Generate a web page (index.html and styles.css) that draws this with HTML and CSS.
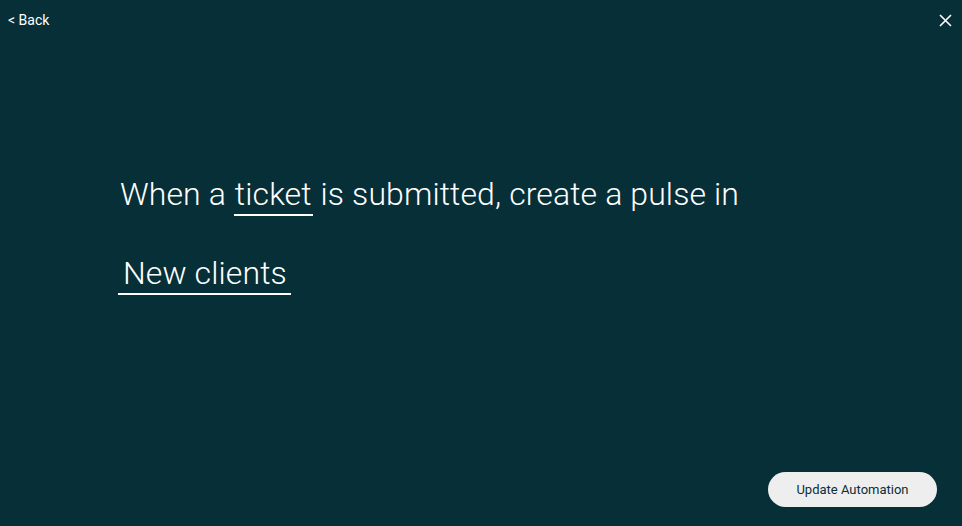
FILE: index.html
```html
<!DOCTYPE html>
<html lang="en">
<head>
    <meta charset="UTF-8">
    <meta name="viewport" content="width=device-width, initial-scale=1.0">
    <title>Edit Automation</title>
    <link rel="stylesheet" href="styles.css">
</head>
<body>
    <div class="page">
        <header class="topbar">
            <a class="back" href="#">&lt; Back</a>
            <button class="close" aria-label="Close">
                <svg width="13" height="13" viewBox="0 0 13 13">
                    <path d="M1 1 L12 12 M12 1 L1 12" stroke="#ffffff" stroke-width="1.6" fill="none"/>
                </svg>
            </button>
        </header>

        <main class="recipe">
            <p class="sentence">
                When a <span class="field">ticket</span> is submitted, create a pulse in
            </p>
            <p class="sentence">
                <span class="field wide">New clients</span>
            </p>
        </main>

        <footer class="actions">
            <button class="update">Update Automation</button>
        </footer>
    </div>
</body>
</html>
```

FILE: styles.css
```css
html, body {
    margin: 0;
    height: 100%;
}
body {
    background-color: #072f37;
    font-family: Roboto, "Noto Sans", sans-serif;
    color: #ffffff;
}
.page {
    height: 100%;
    display: flex;
    flex-direction: column;
}
.topbar {
    display: flex;
    justify-content: space-between;
    align-items: center;
    padding: 12px 10px 0 8px;
}
.back {
    color: #ffffff;
    text-decoration: none;
    font-size: 14px;
}
.close {
    background: none;
    border: none;
    padding: 0;
    cursor: pointer;
    display: flex;
}
.recipe {
    flex: 1;
    padding: 142px 0 0 120px;
}
.sentence {
    margin: 0 0 31px;
    font-size: 32px;
    font-weight: 300;
    line-height: 48px;
    letter-spacing: 0.1px;
}
.field {
    display: inline-block;
    border-bottom: 2px solid #ffffff;
    padding: 0 1px;
    line-height: 40px;
}
.field.wide {
    margin-left: -2px;
    padding: 0 4px 0 5px;
}
.actions {
    display: flex;
    justify-content: flex-end;
    padding: 0 25px 19px 0;
}
.update {
    width: 169px;
    height: 35px;
    border: none;
    border-radius: 18px;
    background-color: #eeeeee;
    color: #0a2f37;
    font-family: Roboto, sans-serif;
    font-size: 13px;
    cursor: pointer;
}
```
